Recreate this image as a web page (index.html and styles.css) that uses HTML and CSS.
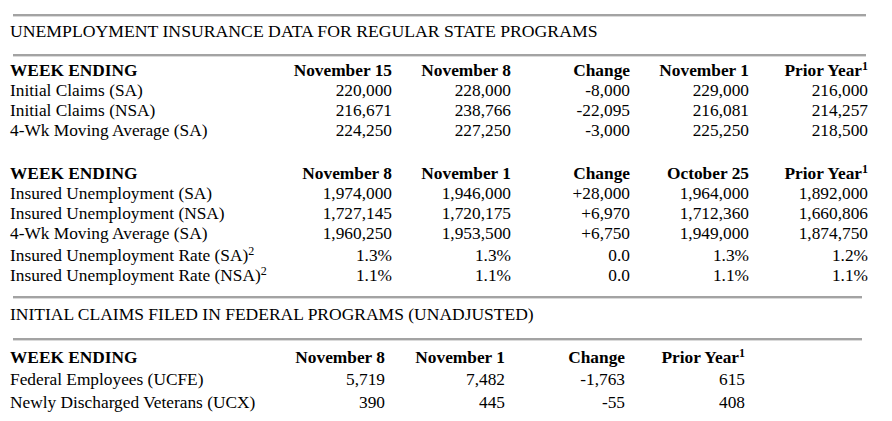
FILE: index.html
```html
<!DOCTYPE html>
<html lang="en">
<head>
<meta charset="utf-8">
<title>Unemployment Insurance Data</title>
<link rel="stylesheet" href="styles.css">
</head>
<body>
<main class="page">
  <section class="block">
    <div class="rule"></div>
    <h1 class="title">UNEMPLOYMENT INSURANCE DATA FOR REGULAR STATE PROGRAMS</h1>
    <div class="rule"></div>
    <div class="grid grid-state first">
      <div class="h">WEEK ENDING</div>
      <div class="h n">November 15</div>
      <div class="h n">November 8</div>
      <div class="h n">Change</div>
      <div class="h n">November 1</div>
      <div class="h n">Prior Year<sup>1</sup></div>

      <div>Initial Claims (SA)</div>
      <div class="n">220,000</div>
      <div class="n">228,000</div>
      <div class="n">-8,000</div>
      <div class="n">229,000</div>
      <div class="n">216,000</div>

      <div>Initial Claims (NSA)</div>
      <div class="n">216,671</div>
      <div class="n">238,766</div>
      <div class="n">-22,095</div>
      <div class="n">216,081</div>
      <div class="n">214,257</div>

      <div>4-Wk Moving Average (SA)</div>
      <div class="n">224,250</div>
      <div class="n">227,250</div>
      <div class="n">-3,000</div>
      <div class="n">225,250</div>
      <div class="n">218,500</div>
    </div>

    <div class="grid grid-state second">
      <div class="h">WEEK ENDING</div>
      <div class="h n">November 8</div>
      <div class="h n">November 1</div>
      <div class="h n">Change</div>
      <div class="h n">October 25</div>
      <div class="h n">Prior Year<sup>1</sup></div>

      <div>Insured Unemployment (SA)</div>
      <div class="n">1,974,000</div>
      <div class="n">1,946,000</div>
      <div class="n">+28,000</div>
      <div class="n">1,964,000</div>
      <div class="n">1,892,000</div>

      <div>Insured Unemployment (NSA)</div>
      <div class="n">1,727,145</div>
      <div class="n">1,720,175</div>
      <div class="n">+6,970</div>
      <div class="n">1,712,360</div>
      <div class="n">1,660,806</div>

      <div>4-Wk Moving Average (SA)</div>
      <div class="n">1,960,250</div>
      <div class="n">1,953,500</div>
      <div class="n">+6,750</div>
      <div class="n">1,949,000</div>
      <div class="n">1,874,750</div>

      <div class="tall">Insured Unemployment Rate (SA)<sup>2</sup></div>
      <div class="n tall">1.3%</div>
      <div class="n tall">1.3%</div>
      <div class="n tall">0.0</div>
      <div class="n tall">1.3%</div>
      <div class="n tall">1.2%</div>

      <div>Insured Unemployment Rate (NSA)<sup>2</sup></div>
      <div class="n">1.1%</div>
      <div class="n">1.1%</div>
      <div class="n">0.0</div>
      <div class="n">1.1%</div>
      <div class="n">1.1%</div>
    </div>
  </section>

  <section class="block federal">
    <div class="rule"></div>
    <h2 class="title">INITIAL CLAIMS FILED IN FEDERAL PROGRAMS (UNADJUSTED)</h2>
    <div class="rule"></div>
    <div class="grid grid-fed">
      <div class="h">WEEK ENDING</div>
      <div class="h n">November 8</div>
      <div class="h n">November 1</div>
      <div class="h n">Change</div>
      <div class="h n">Prior Year<sup>1</sup></div>

      <div>Federal Employees (UCFE)</div>
      <div class="n">5,719</div>
      <div class="n">7,482</div>
      <div class="n">-1,763</div>
      <div class="n">615</div>

      <div>Newly Discharged Veterans (UCX)</div>
      <div class="n">390</div>
      <div class="n">445</div>
      <div class="n">-55</div>
      <div class="n">408</div>
    </div>
  </section>
</main>
</body>
</html>
```

FILE: styles.css
```css
html, body {
  margin: 0;
  padding: 0;
  background: #ffffff;
}

body {
  font-family: "Liberation Serif", "Times New Roman", serif;
  font-size: 17.33px;
  color: #000000;
}

.page {
  padding: 14px 0 0 10px;
}

.rule {
  margin-left: 3px;
  width: 853px;
  height: 0;
  border-top: 2px solid #a3a3a3;
  border-bottom: 1px solid #dadada;
}

.title {
  margin: 4px 0 13px;
  font-size: 17.7px;
  font-weight: normal;
  line-height: 20px;
}

.grid {
  display: grid;
  line-height: 20px;
  white-space: nowrap;
}

.grid-state {
  grid-template-columns: 263px repeat(5, 119px);
}

.grid-state.first {
  margin-top: 4px;
}

.grid-state.second {
  margin-top: 23px;
}

.n {
  text-align: right;
}

.h {
  font-weight: bold;
}

.tall {
  padding-top: 2px;
}

sup {
  font-size: 12px;
  font-weight: normal;
  line-height: 0;
  vertical-align: 6px;
}

.h sup {
  font-weight: bold;
}

.federal {
  margin-top: 10px;
}

.federal .rule {
  width: 849px;
}

.federal .title {
  margin: 5px 0 14px;
  font-size: 17.5px;
}

.grid-fed {
  margin-top: 6px;
  grid-template-columns: 257px 118px 120px 120px 120px;
  line-height: 22.3px;
}
```
